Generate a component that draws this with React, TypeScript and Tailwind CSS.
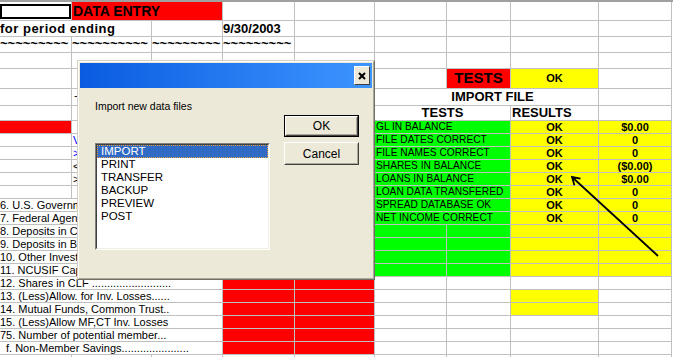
import type { ReactNode } from "react";

const GRID = "border-r border-b border-[#C0C0C0]";

const TESTS = [
    ["GL IN BALANCE", "$0.00"],
    ["FILE DATES CORRECT", "0"],
    ["FILE NAMES CORRECT", "0"],
    ["SHARES IN BALANCE", "($0.00)"],
    ["LOANS IN BALANCE", "$0.00"],
    ["LOAN DATA TRANSFERED", "0"],
    ["SPREAD DATABASE OK", "0"],
    ["NET INCOME CORRECT", "0"],
];

const LABELS = [
    "6. U.S. Governm",
    "7. Federal Agen",
    "8. Deposits in Co",
    "9. Deposits in Ba",
    "10. Other Invest",
    "11. NCUSIF Capi",
    "12. Shares in CLF ..........................",
    "13. (Less)Allow. for Inv. Losses......",
    "14. Mutual Funds, Common Trust..",
    "15. (Less)Allow MF,CT Inv. Losses",
    "75. Number of potential member...",
    "f. Non-Member Savings......................",
];

const MARKS: Record<number, [string, string]> = {
    1: ["V", "text-[#0000FF]"],
    2: [">", "text-[#0000FF]"],
    3: ["<", "text-black"],
    4: [">", "text-black"],
};

// tildes per cell in row 3, so each run stays inside its column
const TILDES = [9, 10, 9, 9];

const ITEMS = ["IMPORT", "PRINT", "TRANSFER", "BACKUP", "PREVIEW", "POST"];

function Cell({ span = 1, className = "", children }: { span?: number; className?: string; children?: ReactNode }) {
    const spanCls = span === 3 ? "col-span-3" : span === 2 ? "col-span-2" : "";
    return (
        <div className={`${GRID} ${spanCls} flex items-center overflow-hidden whitespace-nowrap ${className}`}>
            {children}
        </div>
    );
}

function Blanks({ n }: { n: number }) {
    return (
        <>
            {Array.from({ length: n }, (_, i) => (
                <Cell key={i} />
            ))}
        </>
    );
}

function LowerRow({ k }: { k: number }) {
    const test = TESTS[k];
    const mark = MARKS[k];
    const left =
        k >= 6 ? (
            <Cell span={3} className={`text-[11px] ${k === 17 ? "pl-[6px]" : ""}`}>
                {/* rows 6-11 sit under the dialog: clip them where it starts */}
                <div className={k < 12 ? "w-[77px] overflow-hidden" : ""}>{LABELS[k - 6]}</div>
            </Cell>
        ) : (
            <>
                <Cell className={k === 0 ? "bg-[#FF0000]" : ""} />
                <Cell className={`text-[11px] ${mark ? mark[1] : ""}`}>
                    {mark ? <div className="w-[5px] overflow-hidden pl-[1px]">{mark[0]}</div> : null}
                </Cell>
                <Cell />
            </>
        );
    const red = k >= 12 ? "bg-[#FF0000]" : "";
    return (
        <>
            {left}
            <Cell className={red} />
            <Cell className={red} />
            {test ? (
                <Cell span={2} className="bg-[#00FF00] text-[10.2px] pl-[1px]">
                    {test[0]}
                </Cell>
            ) : k < 12 ? (
                <>
                    <Cell className="bg-[#00FF00]" />
                    <Cell className="bg-[#00FF00]" />
                </>
            ) : (
                <Blanks n={2} />
            )}
            <Cell className={`justify-center font-bold text-[11px] ${k < 12 || k === 13 || k === 14 ? "bg-[#FFFF00]" : ""}`}>
                {test ? "OK" : null}
            </Cell>
            <Cell className={`justify-center font-bold text-[11px] ${k < 12 ? "bg-[#FFFF00]" : ""}`}>
                {test ? test[1] : null}
            </Cell>
        </>
    );
}

function Sheet() {
    return (
        <div className="grid grid-cols-[72px_80px_71px_72px_80px_72px_64px_88px_73px] grid-rows-[19px_16px_16px_16px_20px_17px_15px_repeat(19,13px)] text-black">
            {/* row 1 */}
            <div className={`${GRID} pt-[2px] pb-[1px]`}>
                <div className="h-full border-2 border-black bg-white" />
            </div>
            <Cell span={2} className="bg-[#FF0000] font-bold text-[14px] pl-[1px]">
                DATA ENTRY
            </Cell>
            <Blanks n={6} />
            {/* row 2 */}
            <Cell span={2} className="font-bold text-[13px] tracking-[0.5px]">
                for period ending
            </Cell>
            <Cell />
            <Cell className="font-bold text-[13px]">9/30/2003</Cell>
            <Blanks n={5} />
            {/* row 3 */}
            {TILDES.map((n, i) => (
                <div key={i} className={`${GRID} whitespace-nowrap font-bold text-[13px] leading-[13px]`}>
                    {"~".repeat(n)}
                </div>
            ))}
            <Blanks n={5} />
            {/* row 4 */}
            <Blanks n={9} />
            {/* row 5 */}
            <Blanks n={6} />
            <Cell className="bg-[#FF0000] justify-center font-bold text-[15px]">TESTS</Cell>
            <Cell className="bg-[#FFFF00] justify-center font-bold text-[11px]">OK</Cell>
            <Cell />
            {/* row 6 */}
            <Cell />
            <Cell className="text-[11px] leading-[12px] pl-[2px] pb-[5px]">-</Cell>
            <Blanks n={3} />
            <Cell span={3} className="justify-center font-bold text-[13px] pl-[12px]">
                IMPORT FILE
            </Cell>
            <Cell />
            {/* row 7 */}
            <Blanks n={5} />
            <Cell span={2} className="justify-center font-bold text-[13px]">
                TESTS
            </Cell>
            <Cell className="font-bold text-[13px] pl-[1px]">RESULTS</Cell>
            <Cell />
            {Array.from({ length: 18 }, (_, k) => (
                <LowerRow key={k} k={k} />
            ))}
            <Blanks n={9} />
        </div>
    );
}

function Button({ label, isDefault }: { label: string; isDefault?: boolean }) {
    return (
        <div className={`w-[75px] ${isDefault ? "h-[22px] border border-black" : "h-[23px]"}`}>
            <div className="h-full border border-t-white border-l-white border-r-[#404040] border-b-[#404040]">
                <div className="flex h-full items-center justify-center border border-transparent border-r-[#ACA899] border-b-[#ACA899] bg-[#ECE9D8] text-[12px] text-black">
                    {label}
                </div>
            </div>
        </div>
    );
}

function ImportDialog() {
    return (
        <div className="absolute left-[77px] top-[60px] h-[220px] w-[298px] border border-t-[#D4D0C8] border-l-[#D4D0C8] border-r-[#716F64] border-b-[#716F64] bg-[#ECE9D8]">
            <div className="flex h-full flex-col border border-t-white border-l-white border-r-[#ACA899] border-b-[#ACA899] p-[1px]">
                <div className="flex h-[25px] items-center justify-end bg-gradient-to-r from-[#0A5BE0] to-[#3D95FF] pr-[2px]">
                    <div className="flex h-[19px] w-[16px] items-center justify-center border border-t-white border-l-white border-r-[#404040] border-b-[#404040] bg-[#ECE9D8]">
                        <svg width="8" height="8" viewBox="0 0 8 8">
                            <path d="M1 1 L7 7 M7 1 L1 7" stroke="#000" strokeWidth="2" />
                        </svg>
                    </div>
                </div>
                <div className="flex flex-1">
                    <div className="flex flex-col pl-[15px] pt-[12px]">
                        <div className="text-[10.5px] leading-[13px] text-black">Import new data files</div>
                        <div className="mt-[30px] h-[107px] w-[175px] border border-t-[#808080] border-l-[#808080] border-r-white border-b-white">
                            <div className="h-full border border-t-[#404040] border-l-[#404040] border-r-[#F1EFE2] border-b-[#F1EFE2] bg-white">
                                {ITEMS.map((item, i) => (
                                    <div
                                        key={item}
                                        className={`h-[13px] pl-[3px] text-[11.5px] leading-[11px] ${
                                            i === 0
                                                ? "border border-dotted border-[#E8A040] bg-[#316AC5] text-white"
                                                : "border border-transparent text-black"
                                        }`}
                                    >
                                        {item}
                                    </div>
                                ))}
                            </div>
                        </div>
                    </div>
                    <div className="ml-auto flex flex-col gap-[5px] pr-[13px] pt-[27px]">
                        <Button label="OK" isDefault />
                        <Button label="Cancel" />
                    </div>
                </div>
            </div>
        </div>
    );
}

export default function App() {
    return (
        <div className="relative h-[357px] w-[673px] overflow-hidden bg-white font-['Liberation_Sans',Arial,sans-serif]">
            <div className="h-[2px] bg-[#A0A0A0]" />
            <Sheet />
            <ImportDialog />
            <svg className="pointer-events-none absolute left-0 top-0" width="673" height="357">
                <path d="M658 256 L572 177 M580.5 178.7 L572 177 L574.4 185.3" stroke="#000" strokeWidth="1.8" fill="none" />
            </svg>
        </div>
    );
}
